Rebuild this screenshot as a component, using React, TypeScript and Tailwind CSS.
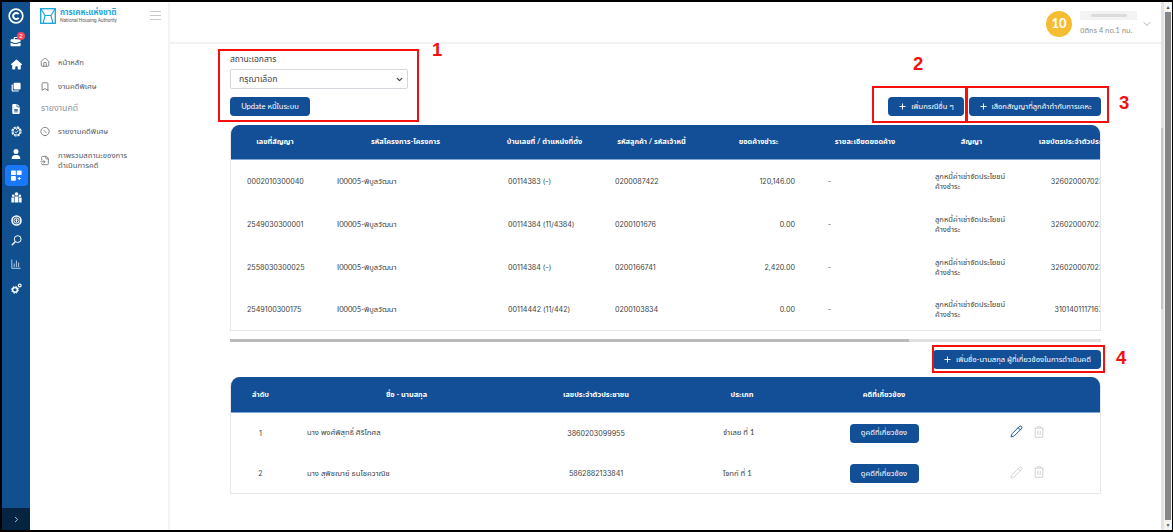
import type { ReactNode } from "react";
import { Bookmark, ChevronDown, ChevronRight, CircleSlash, FileInput, House, Pencil, Plus } from "lucide-react";
import { FaHouse, FaFileLines, FaUser } from "react-icons/fa6";

function RailItem({ className, children }: { className: string; children: ReactNode }) {
  return <div className={`flex w-full shrink-0 items-center justify-center text-white ${className}`}>{children}</div>;
}

function GridPlus() {
  return (
    <svg width="11" height="11" viewBox="0 0 11 11" fill="currentColor">
      <rect x="0" y="0.5" width="4.8" height="4.6" rx="0.6" />
      <rect x="5.8" y="0.5" width="4.8" height="4.6" rx="0.6" />
      <rect x="0" y="6.1" width="4.8" height="4.6" rx="0.6" />
      <path d="M7.8 7h1v1h1v1h-1v1h-1V9h-1V8h1z" />
    </svg>
  );
}

function Rail() {
  return (
    <aside className="flex h-full w-[28px] shrink-0 flex-col items-center bg-[#11508f]">
      <RailItem className="h-[27px]">
        <svg width="16" height="16" viewBox="0 0 16 16" fill="none" stroke="currentColor">
          <circle cx="8" cy="8" r="6.8" strokeWidth="1.7" />
          <path d="M10.7 6.1A3.1 3.1 0 1 0 10.7 9.9" strokeWidth="2" />
        </svg>
      </RailItem>
      <RailItem className="relative h-[24px]">
        <svg width="12" height="11" viewBox="0 0 12 11" fill="currentColor">
          <path d="M0.5 4.2a1 1 0 0 1 1-1h2.2V2a1 1 0 0 1 1-1h3v1.1H4.9v1.1H9.6a1 1 0 0 1 1 1v1.4L6.3 6.9H4.6L0.5 5.6z" />
          <path d="M0.5 6.7l3.8 1.2h2.3l4-1.2v2.5a1 1 0 0 1-1 1H1.5a1 1 0 0 1-1-1z" />
        </svg>
        <span className="absolute top-[3px] left-[15px] flex size-[8px] items-center justify-center rounded-full bg-[#f5455c] font-['Liberation_Sans'] text-[6px] leading-none">2</span>
      </RailItem>
      <RailItem className="h-[23px]"><FaHouse size={11} /></RailItem>
      <RailItem className="h-[22px]">
        <svg width="10" height="10" viewBox="0 0 10 10" fill="currentColor">
          <rect x="2.6" y="0.8" width="7" height="6.6" rx="1" />
          <path d="M0.6 2.6h1.2v5.8h6v1H1.6a1 1 0 0 1-1-1z" />
        </svg>
      </RailItem>
      <RailItem className="h-[22px]"><FaFileLines size={10} /></RailItem>
      <RailItem className="h-[23px]">
        <svg width="11" height="11" viewBox="0 0 11 11" fill="none" stroke="currentColor">
          <circle cx="5.5" cy="5.5" r="4.6" strokeWidth="1.1" strokeDasharray="2.4 1.2" />
          <circle cx="5.5" cy="5.5" r="3.5" strokeWidth="1.1" />
          <path d="M3.8 5.6l1.4 1.2 2-2.4M5.5 3v1" strokeWidth="0.9" />
        </svg>
      </RailItem>
      <RailItem className="h-[22px]"><FaUser size={10} /></RailItem>
      <div className="flex h-[21px] w-[23px] shrink-0 items-center justify-center rounded-[4px] bg-[#1a78ff] text-white"><GridPlus /></div>
      <RailItem className="h-[23px]">
        <svg width="11" height="11" viewBox="0 0 11 11" fill="currentColor">
          <circle cx="5.5" cy="2" r="1.8" />
          <circle cx="2.2" cy="3.8" r="1.3" />
          <circle cx="8.8" cy="3.8" r="1.3" />
          <path d="M3.6 4.6h3.8v5.9H3.6zM0.4 5.6h2.5v4.9H0.4zM8.1 5.6h2.5v4.9H8.1z" />
        </svg>
      </RailItem>
      <RailItem className="h-[22px]">
        <svg width="11" height="11" viewBox="0 0 11 11" fill="none" stroke="currentColor">
          <circle cx="5.5" cy="5.5" r="4.5" strokeWidth="1.6" />
          <circle cx="5.5" cy="5.5" r="2.6" strokeWidth="1" />
          <path d="M5.5 3.8v3.4M4.4 5.4h2.2" strokeWidth="0.9" />
        </svg>
      </RailItem>
      <RailItem className="h-[19px]">
        <svg width="11" height="11" viewBox="0 0 11 11" fill="none" stroke="currentColor">
          <circle cx="6.7" cy="4.1" r="3.4" strokeWidth="1" />
          <path d="M4.2 6.8L0.8 10.2" strokeWidth="1.4" />
        </svg>
      </RailItem>
      <RailItem className="h-[28px]">
        <svg width="10" height="10" viewBox="0 0 10 10" fill="none" stroke="#c3d7ec">
          <path d="M0.8 0.5v8.8h8.8M3.2 4.5v3.6M5.4 1.5v6.6M7.6 3.5v4.6" strokeWidth="0.9" />
        </svg>
      </RailItem>
      <RailItem className="h-[21px]">
        <svg width="11" height="11" viewBox="0 0 11 11" fill="none" stroke="currentColor">
          <circle cx="4" cy="6.8" r="2.4" strokeWidth="1.5" />
          <circle cx="4" cy="6.8" r="3.5" strokeWidth="1" strokeDasharray="1.4 1.35" />
          <circle cx="8.7" cy="2.5" r="1.4" strokeWidth="1.2" />
        </svg>
      </RailItem>
      <div className="mt-auto flex h-[22px] w-full items-center justify-center bg-[#052442] text-[#b9cde0]">
        <ChevronRight size={9} strokeWidth={2.5} />
      </div>
    </aside>
  );
}

function NavItem({ icon, className, children }: { icon: ReactNode; className: string; children: ReactNode }) {
  return (
    <a className={`flex items-center gap-[8px] text-[7.7px] leading-[10px] text-[#55585f] ${className}`}>
      <span className="flex w-[10px] justify-center text-[#666a73]">{icon}</span>
      <span>{children}</span>
    </a>
  );
}

function Sidebar() {
  return (
    <nav className="flex h-full w-[140px] shrink-0 flex-col border-r-2 border-[#f3f3f3] bg-white">
      <div className="flex h-[27px] shrink-0 items-center pl-[10px]">
        <svg width="16" height="16" viewBox="0 0 16 16" fill="none" stroke="#16a2da">
          <rect x="0.7" y="0.7" width="14.6" height="14.6" strokeWidth="1.3" />
          <path d="M1 1l4 6.5h6L15 1M5 7.5L3.2 15M11 7.5l1.8 7.5" strokeWidth="1.1" />
        </svg>
        <div className="ml-[4px] flex w-[60px] flex-col">
          <span className="text-[8px] leading-[9px] font-bold whitespace-nowrap text-[#24a6dc]">การเคหะแห่งชาติ</span>
          <span className="font-[Roboto] text-[5px] leading-[6px] tracking-[-0.12px] whitespace-nowrap text-[#666]">National Housing Authority</span>
        </div>
        <svg className="ml-[30px]" width="11" height="9" viewBox="0 0 11 9" stroke="#c9c9c9" strokeWidth="1">
          <path d="M0 0.5h11M0 4.5h11M0 8.5h11" />
        </svg>
      </div>
      <NavItem className="mt-[22px] h-[22px] pl-[10px]" icon={<House size={11} strokeWidth={1.9} />}>หน้าหลัก</NavItem>
      <NavItem className="mt-[2px] h-[22px] pl-[10px]" icon={<Bookmark size={11} strokeWidth={1.9} />}>งานคดีพิเศษ</NavItem>
      <div className="flex h-[21px] items-center pl-[11px] text-[8.7px] text-[#9296a0]">รายงานคดี</div>
      <NavItem className="mt-px h-[24px] pl-[10px]" icon={<CircleSlash className="rotate-90" size={11} strokeWidth={1.9} />}>รายงานคดีพิเศษ</NavItem>
      <NavItem className="mt-[6px] h-[22px] pl-[10px]" icon={<FileInput size={11} strokeWidth={1.9} />}>
        ภาพรวมสถานะของการ<br />ดำเนินการคดี
      </NavItem>
    </nav>
  );
}

function Header() {
  return (
    <header className="flex h-[42px] shrink-0 items-center justify-end border-b-2 border-[#f1f1f1] bg-white pt-[3px] pr-[8px]">
      <div className="flex size-[26px] items-center justify-center rounded-full bg-[#f6bd33] font-[Lato] text-[13px] font-bold text-white">10</div>
      <div className="ml-[8px] flex w-[57px] flex-col">
        <span className="flex h-[9px] items-center justify-center bg-[#f3f3f3]">
          <span className="h-[3px] w-[36px] rounded-full bg-[#dcdcdc]" />
        </span>
        <span className="mt-[6px] text-[7.3px] leading-[10px] whitespace-nowrap text-[#8c8c8c]">นิติกร 4 กด.1 กม.</span>
      </div>
      <ChevronDown className="ml-[4px] text-[#aaa]" size={12} strokeWidth={1.9} />
    </header>
  );
}

function BlueButton({ plus, className, children }: { plus?: boolean; className: string; children: ReactNode }) {
  return (
    <button className={`flex shrink-0 items-center justify-center gap-[4px] rounded-[4px] bg-[#134f97] text-[7.6px] leading-none whitespace-nowrap text-white ${className}`}>
      {plus && <Plus size={9} strokeWidth={2.5} />}
      <span>{children}</span>
    </button>
  );
}

const CONTRACT_COLS = "grid grid-cols-[90px_171px_107px_107px_107px_106px_107px_107px]";
const PEOPLE_COLS = "grid grid-cols-[61px_231px_148px_144px_140px_146px]";

const contractHeads = ["เลขที่สัญญา", "รหัสโครงการ-โครงการ", "บ้านเลขที่ / ตำแหน่งที่ตั้ง", "รหัสลูกค้า / รหัสเจ้าหนี้", "ยอดค้างชำระ", "รายละเอียดยอดค้าง", "สัญญา", "เลขบัตรประจำตัวประชาชน"];

const contracts = [
  { no: "0002010300040", house: "00114383 (-)", customer: "0200087422", due: "120,146.00", id: "3260200070231" },
  { no: "2549030300001", house: "00114384 (11/4384)", customer: "0200101676", due: "0.00", id: "3260200070231" },
  { no: "2558030300025", house: "00114384 (-)", customer: "0200166741", due: "2,420.00", id: "3260200070231" },
  { no: "2549100300175", house: "00114442 (11/442)", customer: "0200103834", due: "0.00", id: "3101401117167" },
];

const people = [
  { n: 1, name: "นาง พงศ์พิสุทธิ์ ศิริโกศล", id: "3860203099955", role: "จำเลย ที่ 1", edit: true },
  { n: 2, name: "นาง สุพิชฌาย์ ธนโชควาณิช", id: "5862882133841", role: "โจทก์ ที่ 1", edit: false },
];

function Num({ className, children }: { className?: string; children: ReactNode }) {
  return <span className={`pt-[2px] font-[Inter] text-[7.2px] tracking-[-0.03px] ${className ?? ""}`}>{children}</span>;
}

function Trash() {
  return (
    <svg width="10" height="12" viewBox="0 0 10 12" fill="none" stroke="#cfcfcf" strokeWidth="0.9">
      <path d="M0.5 2.2h9M3.3 2V0.7h3.4V2M1.2 2.4v8.9h7.6V2.4M3.8 4.6v4.4M6.2 4.6v4.4" />
    </svg>
  );
}

function ContractTable() {
  return (
    <section className="mt-[9px] h-[206px] w-[871px] shrink-0 overflow-hidden rounded-t-[9px] border border-t-0 border-[#e4e6ea] bg-white">
      <div className={`${CONTRACT_COLS} -mx-px h-[35px] items-center border-b border-[#7fa6d6] bg-[#134f97] text-center text-[7.35px] font-bold text-white`}>
        {contractHeads.map((h) => <span key={h} className="flex justify-center whitespace-nowrap">{h}</span>)}
      </div>
      {contracts.map((c) => (
        <div key={c.no} className={`${CONTRACT_COLS} -mx-px h-[42.7px] items-center text-[7.6px] leading-[10px] whitespace-nowrap text-[#3d3f44]`}>
          <Num className="pl-[17px]">{c.no}</Num>
          <span className="pl-[17px]">I00005-พิบูลวัฒนา</span>
          <Num className="pl-[17px]">{c.house}</Num>
          <Num className="pl-[17px]">{c.customer}</Num>
          <Num className="pr-[17px] text-right">{c.due}</Num>
          <span className="pl-[16px]">-</span>
          <span className="pl-[17px]">ลูกหนี้ค่าเช่าจัดประโยชน์<br />ค้างชำระ</span>
          <Num className="text-center">{c.id}</Num>
        </div>
      ))}
    </section>
  );
}

function PeopleTable() {
  return (
    <section className="mt-[8px] h-[117px] w-[871px] shrink-0 overflow-hidden rounded-t-[9px] border border-t-0 border-[#e4e6ea] bg-white">
      <div className={`${PEOPLE_COLS} -mx-px h-[36px] items-center border-b border-[#7fa6d6] bg-[#134f97] text-center text-[7.35px] font-bold text-white`}>
        <span>ลำดับ</span>
        <span>ชื่อ - นามสกุล</span>
        <span>เลขประจำตัวประชาชน</span>
        <span>ประเภท</span>
        <span>คดีที่เกี่ยวข้อง</span>
      </div>
      {people.map((p) => (
        <div key={p.n} className={`${PEOPLE_COLS} -mx-px h-[40.5px] items-center text-[7.7px] whitespace-nowrap text-[#3d3f44]`}>
          <Num className="text-center">{p.n}</Num>
          <span className="pl-[16px]">{p.name}</span>
          <Num className="text-center">{p.id}</Num>
          <span className="pl-[53px]">{p.role}</span>
          <span className="flex justify-center"><BlueButton className="h-[19px] w-[69px]">ดูคดีที่เกี่ยวข้อง</BlueButton></span>
          <span className="flex items-center justify-center gap-[11px] pb-[3px]">
            <Pencil size={13} strokeWidth={1.8} className={p.edit ? "text-[#134f97]" : "text-[#d2d2d2]"} />
            <Trash />
          </span>
        </div>
      ))}
    </section>
  );
}

function Content() {
  return (
    <main className="flex min-h-0 flex-1 flex-col bg-white pt-[9px] pl-[60px]">
      <label className="flex h-[12px] items-center text-[8.5px] leading-none text-[#3d3f44]">สถานะเอกสาร</label>
      <div className="mt-[4px] flex h-[20px] w-[178px] shrink-0 items-center justify-between rounded-[2px] border border-[#d3d7dc] pr-[3px] pl-[8px] text-[8.7px] text-[#44474c]">
        <span>กรุณาเลือก</span>
        <ChevronDown size={9} strokeWidth={3.5} />
      </div>
      <div className="mt-[8px] flex w-[871px] items-center">
        <BlueButton className="h-[19px] w-[80px]">Update หนี้ในระบบ</BlueButton>
        <BlueButton plus className="ml-auto h-[19px] w-[76px]">เพิ่มกรณีอื่น ๆ</BlueButton>
        <BlueButton plus className="ml-[5px] h-[19px] w-[132px]">เลือกสัญญาที่ลูกค้าทำกับการเคหะ</BlueButton>
      </div>
      <ContractTable />
      <div className="mt-[8px] h-[3px] w-[871px] shrink-0 bg-[#e0e0e0]">
        <div className="h-full w-[679px] bg-[#bababa]" />
      </div>
      <div className="mt-[8px] flex w-[871px] justify-end">
        <BlueButton plus className="h-[19px] w-[168px]">เพิ่มชื่อ-นามสกุล ผู้ที่เกี่ยวข้องในการดำเนินคดี</BlueButton>
      </div>
      <PeopleTable />
    </main>
  );
}

function Marker({ className, children }: { className: string; children: ReactNode }) {
  return <span className={`absolute font-['Liberation_Sans'] text-[18.5px] leading-none font-bold text-[#f50f0f] ${className}`}>{children}</span>;
}

export default function App() {
  return (
    <div lang="th" className="relative flex h-[532px] w-[1173px] overflow-hidden border-t-2 border-r border-b-2 border-l-2 border-black bg-white font-[Lato,'Noto_Sans_Thai',sans-serif]">
      <Rail />
      <Sidebar />
      <div className="flex min-w-0 flex-1 flex-col">
        <Header />
        <Content />
      </div>
      <div className="h-full w-[3px] shrink-0 bg-[#e2e2e2] pt-[126px]">
        <div className="h-[181px] w-[2px] bg-[#c4c4c4]" />
      </div>
      <div className="flex h-full w-[8px] shrink-0 flex-col items-center bg-[#f4f4f4]">
        <span className="flex h-[10px] items-center text-[5px] leading-none text-[#555]">▲</span>
        <span className="w-[6px] flex-1 bg-[#858585]" />
        <span className="flex h-[10px] items-center text-[5px] leading-none text-[#555]">▼</span>
      </div>

      <div className="absolute top-[47px] left-[216px] h-[73px] w-[201px] border-2 border-[#f50f0f]" />
      <div className="absolute top-[84px] left-[870px] h-[37px] w-[96px] border-2 border-[#f50f0f]" />
      <div className="absolute top-[84px] left-[963px] h-[37px] w-[144px] border-2 border-[#f50f0f]" />
      <div className="absolute top-[343px] left-[930px] h-[28px] w-[173px] border-2 border-[#f50f0f]" />
      <Marker className="top-[39px] left-[430px]">1</Marker>
      <Marker className="top-[53px] left-[911px]">2</Marker>
      <Marker className="top-[92px] left-[1117px]">3</Marker>
      <Marker className="top-[347px] left-[1114px]">4</Marker>
    </div>
  );
}
